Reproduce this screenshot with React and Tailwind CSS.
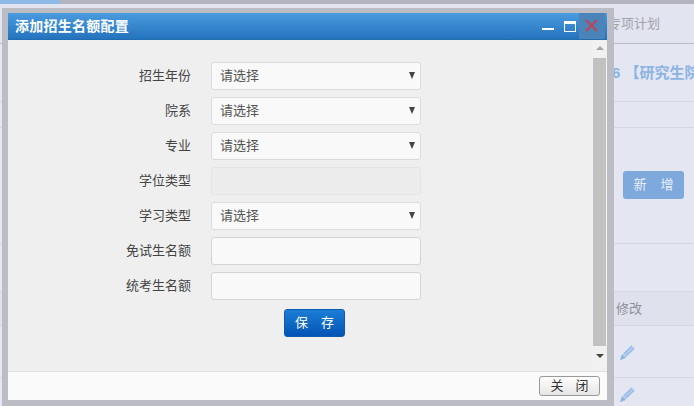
const FONT = 'font-["Liberation_Sans","Noto_Sans_CJK_SC",sans-serif]'

function Pencil({ className }) {
  return (
    <svg width="18" height="18" viewBox="0 0 18 18" className={className}>
      <path d="M1 17 L3 11.5 L12.5 2 L16 5.5 L6.5 15 Z" fill="#b4cdec" />
      <path d="M1 17 L3 11.5 L6.5 15 Z" fill="#8fb3e0" />
      <path d="M5 10.5 L13 3.5 M7 12.5 L15 5.5" stroke="#8db2e2" strokeWidth="1" />
    </svg>
  )
}

function SelectField({ label }) {
  return (
    <div className="flex items-center h-[35px]">
      <label className="w-[203px] pr-[20px] text-right text-[13px] text-[#444]">{label}</label>
      <div className="relative flex items-center w-[210px] h-[28px] pl-[8px] rounded-[3px] border border-[#dcdcdc] bg-[#f9f9f9] text-[13px] text-[#555]">
        请选择
        <span className="absolute right-[5px] top-[9px] w-0 h-0 border-x-[3.5px] border-x-transparent border-t-[7px] border-t-[#444]" />
      </div>
    </div>
  )
}

function InputField({ label, disabled }) {
  return (
    <div className="flex items-center h-[35px]">
      <label className="w-[203px] pr-[20px] text-right text-[13px] text-[#444]">{label}</label>
      <div className={`w-[210px] h-[28px] rounded-[3px] border ${disabled ? 'border-[#e4e4e4] bg-[#ececec]' : 'border-[#d4d4d4] bg-[#f9f9f9]'}`} />
    </div>
  )
}

function Backdrop() {
  return (
    <div className="w-[694px] h-[406px] overflow-hidden bg-[#e4e7f2] flex flex-col">
      <div className="h-[4px] bg-[#b4b4bf]" />
      <div className="h-[40px] shrink-0 border-b border-[#b9bbc6] flex items-center justify-end pr-[34px] text-[13px] text-[#a0a2ab] bg-[#e2e4ef]">
        专项计划
      </div>
      <div className="h-[58px] shrink-0 border-b border-[#d5d8e4] flex items-center pl-[612px] pt-[2px] text-[15px] font-bold whitespace-nowrap text-[#8cb3e2]">
        6 【研究生院
      </div>
      <div className="h-[26px] shrink-0 border-b border-[#d5d8e4]" />
      <div className="h-[116px] shrink-0 border-b border-[#d5d8e4] flex items-start pt-[43px] pl-[607px]">
        <div className="w-[6px] h-[28px] bg-[#7ea9dc]" />
        <div className="ml-[10px] w-[61px] h-[28px] rounded-[3px] bg-[#7ea9dc] flex items-center justify-center gap-[14px] text-[13px] text-[#e8eef8]">
          <span>新</span>
          <span>增</span>
        </div>
      </div>
      <div className="h-[47px] shrink-0" />
      <div className="h-[35px] shrink-0 bg-[#dfe2ed] border-y border-[#d5d8e4] flex items-center pl-[616px] text-[13px] text-[#8e9098]">
        修改
      </div>
      <div className="h-[52px] shrink-0 border-b border-[#d5d8e4] flex items-center pl-[619px]">
        <Pencil />
      </div>
      <div className="flex-1 flex items-start pt-[7px] pl-[619px]">
        <Pencil />
      </div>
    </div>
  )
}

export default function App() {
  return (
    <div className={`relative w-[694px] h-[406px] overflow-hidden ${FONT}`}>
      <Backdrop />
      {/* 弹窗遮罩边框 */}
      <div className="absolute left-0 top-0 w-[60px] h-[4px] bg-[#8dbbe6]" />
      <div className="absolute left-[2px] top-[8px] w-[612px] h-[398px] bg-[#bcbcc4]" />
      <div className="absolute left-[8px] top-[13px] w-[599px] h-[387px] flex flex-col bg-[#efefef]">
        <div className="h-[27px] shrink-0 flex items-center justify-between pl-[7px] bg-gradient-to-b from-[#4a9be0] to-[#2473bd] border-b border-[#1f6cb3]">
          <span className="text-[14px] font-bold tracking-[0.25px] text-white">添加招生名额配置</span>
          <div className="flex items-center">
            <span className="mt-[6px] w-[12px] h-[2px] bg-white" />
            <span className="ml-[10px] w-[12px] h-[11px] border border-white border-t-[3px]" />
            <svg width="26" height="26" viewBox="0 0 26 26" className="ml-[3px] mr-[2px]">
              <rect width="26" height="26" fill="#4a84b8" />
              <path d="M7 7 L18 18 M18 7 L7 18" stroke="#b9465a" strokeWidth="2.2" />
            </svg>
          </div>
        </div>
        <div className="flex-1 min-h-0 flex">
          <div className="flex-1 pt-[4px]">
            <div className="h-[14px]" />
            <SelectField label="招生年份" />
            <SelectField label="院系" />
            <SelectField label="专业" />
            <InputField label="学位类型" disabled />
            <SelectField label="学习类型" />
            <InputField label="免试生名额" />
            <InputField label="统考生名额" />
            <div className="mt-[6px] ml-[276px] w-[61px] h-[28px] rounded-[3px] bg-gradient-to-b from-[#1c7ed6] to-[#0454b4] border border-[#0a5cb0] flex items-center justify-center gap-[13px] text-[13px] text-white">
              <span>保</span>
              <span>存</span>
            </div>
          </div>
          <div className="w-[15px] shrink-0 flex flex-col items-center bg-[#f1f1f1]">
            <span className="mt-[6px] w-0 h-0 border-x-[4px] border-x-transparent border-b-[4px] border-b-[#a5a5a5]" />
            <div className="mt-[8px] w-[13px] h-[288px] bg-[#c1c1c1]" />
            <span className="mt-[8px] w-0 h-0 border-x-[4px] border-x-transparent border-t-[4px] border-t-[#444]" />
          </div>
        </div>
        <div className="h-[29px] shrink-0 flex items-center justify-end pr-[7px] border-t border-[#dedede] bg-[#fafafa]">
          <div className="w-[61px] h-[20px] rounded-[3px] border border-[#9a9a9a] bg-gradient-to-b from-[#fdfdfd] to-[#e6e6e6] flex items-center justify-center gap-[12px] text-[13px] text-[#333]">
            <span>关</span>
            <span>闭</span>
          </div>
        </div>
      </div>
    </div>
  )
}
